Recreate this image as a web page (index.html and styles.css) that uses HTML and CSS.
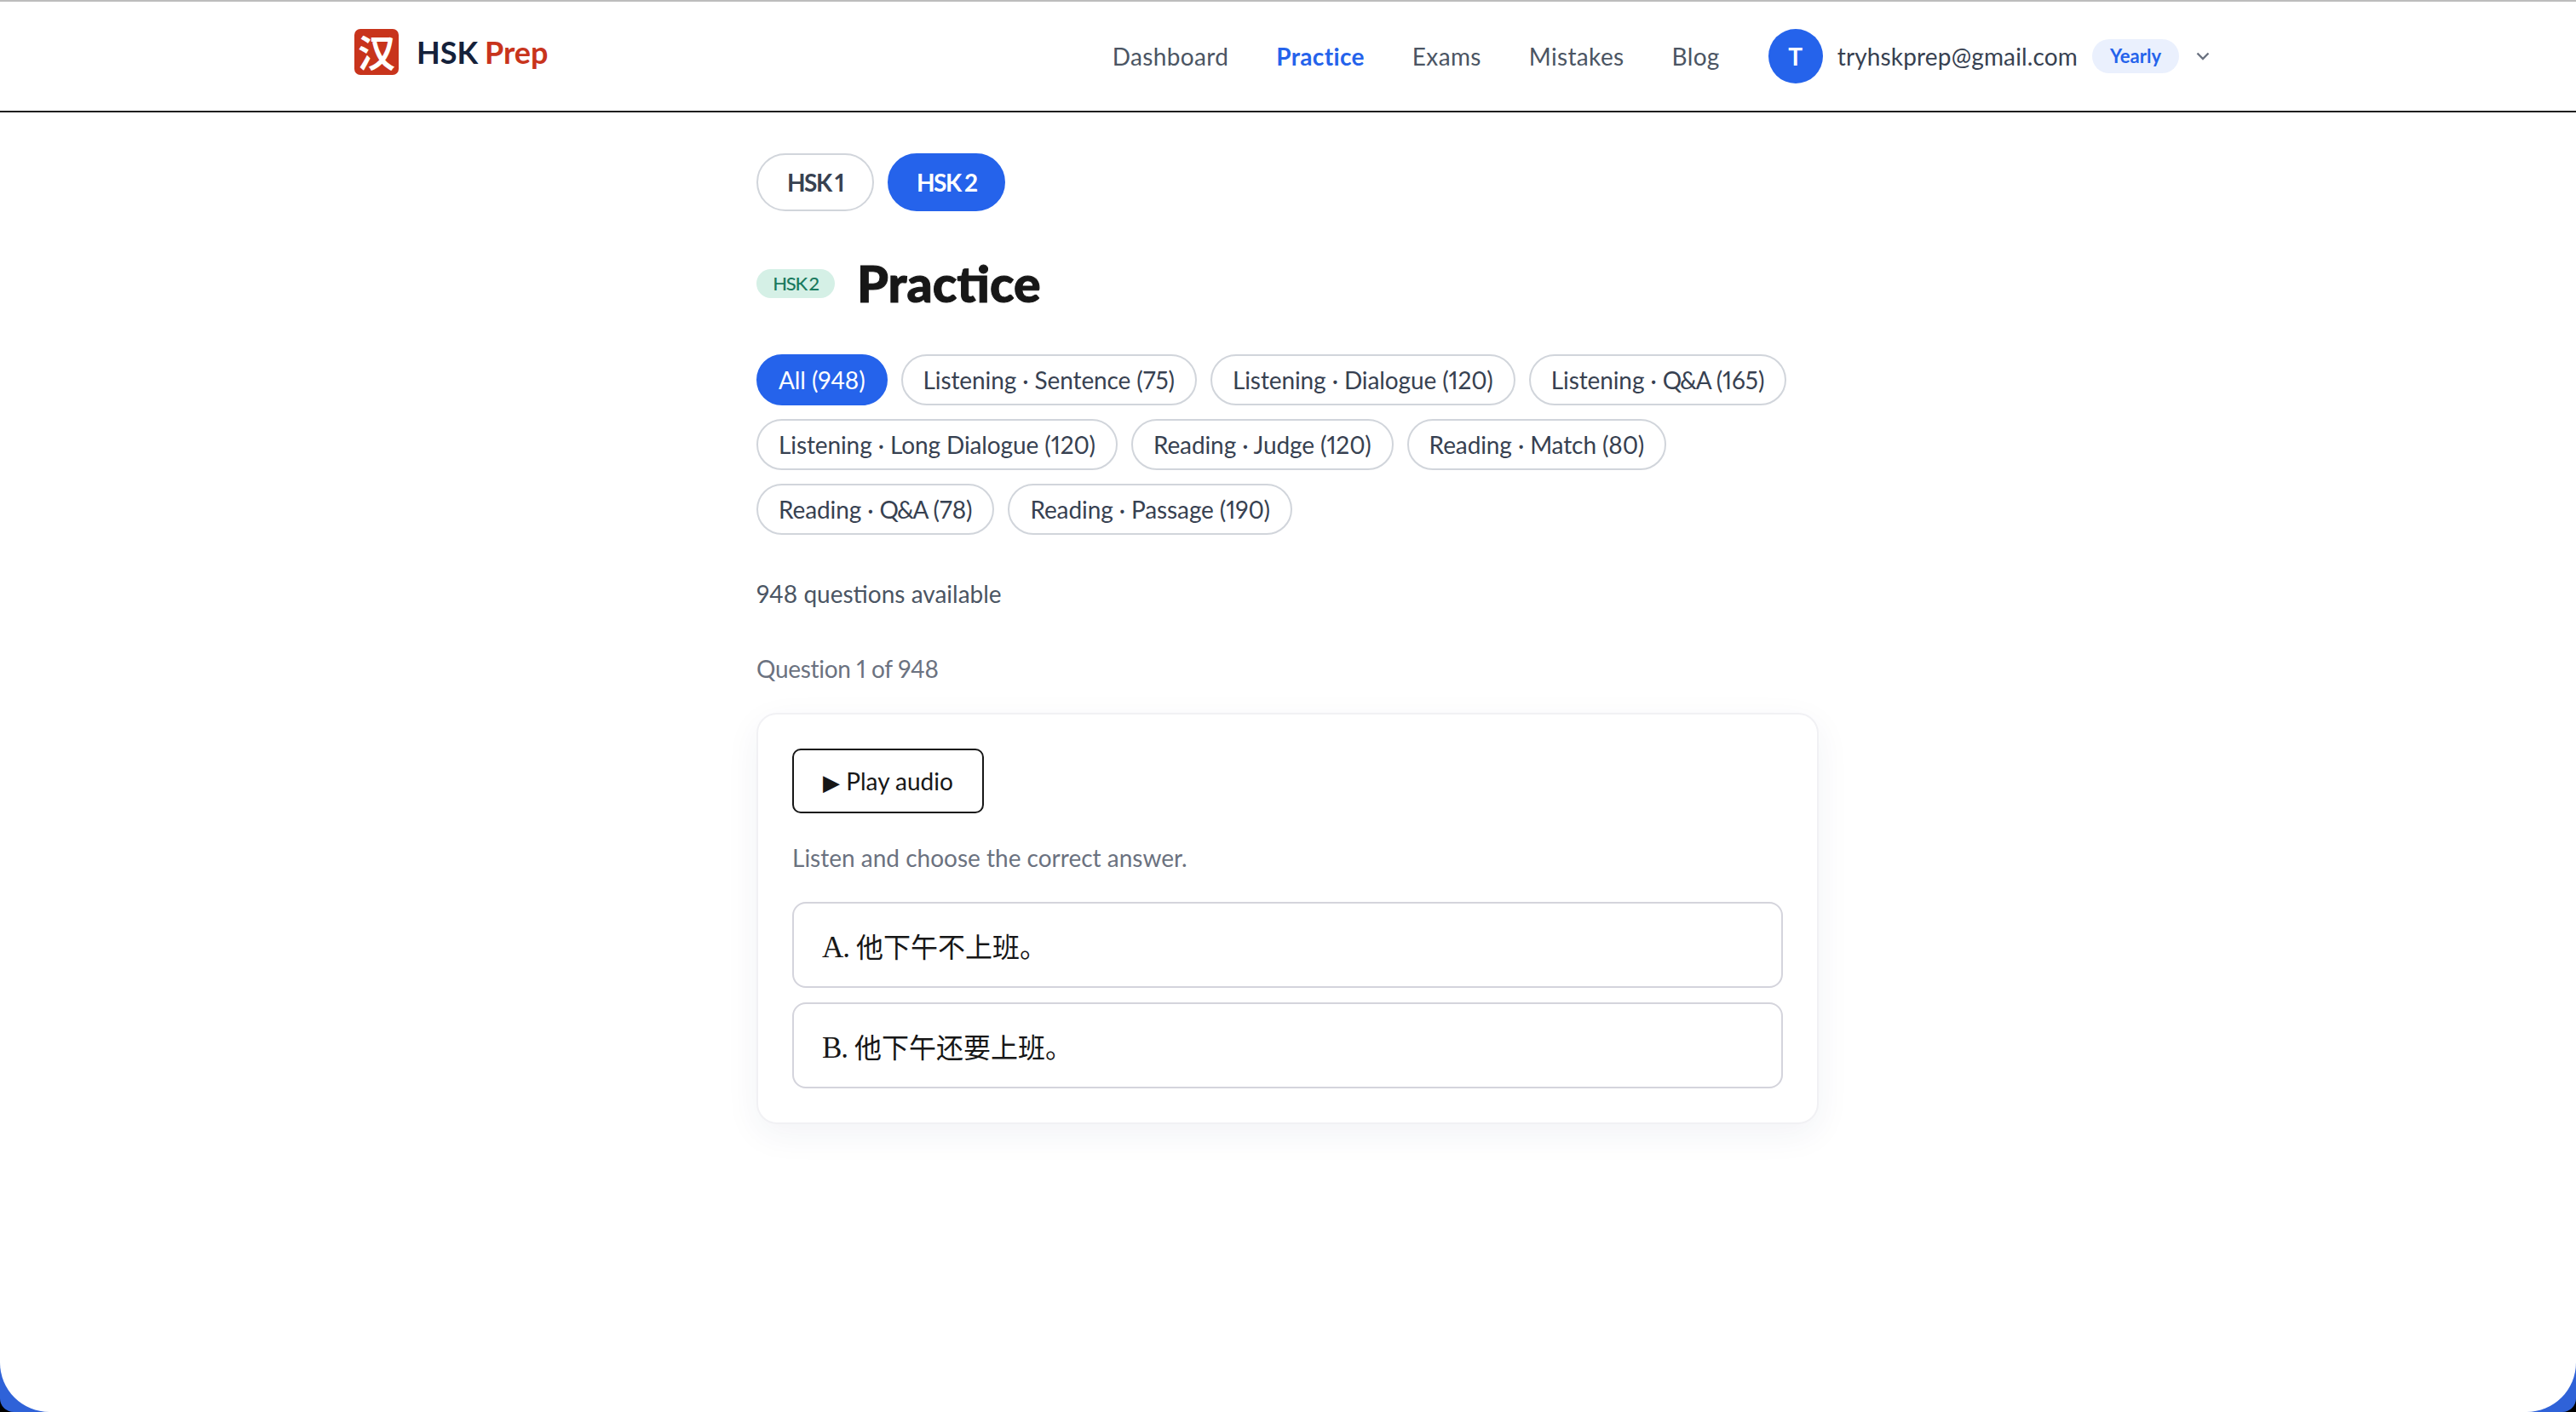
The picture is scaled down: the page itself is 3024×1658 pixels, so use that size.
FILE: index.html
```html
<!DOCTYPE html>
<html lang="en">
<head>
  <meta charset="UTF-8" />
  <meta name="viewport" content="width=device-width, initial-scale=1.0" />
  <title>HSK Prep</title>
  <link rel="stylesheet" href="styles.css">
</head>
<body>
  <div class="frame">
    <div class="page">
      <header class="topbar">
        <a class="brand" href="#">
          <span class="brand-mark">汉</span>
          <span class="brand-name">HSK <span class="brand-accent">Prep</span></span>
        </a>
        <nav class="nav">
          <a href="#">Dashboard</a>
          <a href="#" class="active">Practice</a>
          <a href="#">Exams</a>
          <a href="#">Mistakes</a>
          <a href="#">Blog</a>
        </nav>
        <div class="user">
          <span class="avatar">T</span>
          <span class="email">tryhskprep@gmail.com</span>
          <span class="plan">Yearly</span>
          <svg class="chevron" viewBox="0 0 16 10" aria-hidden="true">
            <path d="M1.5 1.5L8 8l6.5-6.5" fill="none" stroke="#6b7280" stroke-width="2.4"/>
          </svg>
        </div>
      </header>

      <main class="content">
        <div class="levels">
          <button class="level">HSK 1</button>
          <button class="level active">HSK 2</button>
        </div>

        <div class="title-row">
          <span class="badge">HSK 2</span>
          <h1>Practice</h1>
        </div>

        <div class="filters">
          <button class="filter active">All (948)</button>
          <button class="filter">Listening · Sentence (75)</button>
          <button class="filter">Listening · Dialogue (120)</button>
          <button class="filter">Listening · <span class="qa">Q&amp;A</span> (165)</button>
          <button class="filter">Listening · Long Dialogue (120)</button>
          <button class="filter">Reading · Judge (120)</button>
          <button class="filter">Reading · Match (80)</button>
          <button class="filter">Reading · <span class="qa">Q&amp;A</span> (78)</button>
          <button class="filter">Reading · Passage (190)</button>
        </div>

        <p class="available">948 questions available</p>
        <p class="counter">Question 1 of 948</p>

        <section class="card">
          <button class="play"><span class="play-icon">▶</span> Play audio</button>
          <p class="prompt">Listen and choose the correct answer.</p>
          <div class="options">
            <button class="option"><span class="option-key">A.</span> 他下午不上班。</button>
            <button class="option"><span class="option-key">B.</span> 他下午还要上班。</button>
          </div>
        </section>
      </main>
    </div>
  </div>
</body>
</html>
```

FILE: styles.css
```css
* { box-sizing: border-box; }
html, body {
  margin: 0;
  height: 100%;
  background: #000;
  overflow: hidden;
}
body {
  font-family: Lato, "Noto Sans", sans-serif;
  font-variant-numeric: proportional-nums;
  color: #171717;
}
button { font-family: inherit; font-variant-numeric: inherit; cursor: pointer; }

.frame {
  height: 100%;
  background: #2f62d8;
  border-radius: 0 0 16px 16px;
}
.page {
  height: 100%;
  background: #fff;
  border-radius: 0 0 58px 58px;
  border-top: 2px solid #bdbdbd;
}

.topbar {
  display: flex;
  align-items: center;
  height: 130px;
  padding: 0 430px 0 416px;
  border-bottom: 2px solid #1f1f1f;
}
.brand {
  display: flex;
  align-items: center;
  gap: 21px;
  text-decoration: none;
  margin-top: -10px;
}
.brand-mark {
  width: 52px;
  height: 54px;
  line-height: 52px;
  text-align: center;
  border-radius: 7px;
  background: #c8341c;
  color: #fff;
  font-family: "Noto Sans CJK SC", sans-serif;
  font-size: 44px;
  font-weight: 700;
}
.brand-name {
  font-size: 36px;
  font-weight: 700;
  color: #14213a;
  word-spacing: -1px;
}
.brand-accent { color: #c8341c; }

.nav {
  display: flex;
  gap: 56px;
  margin-left: auto;
}
.nav a {
  font-size: 28px;
  letter-spacing: 0.35px;
  color: #4b5563;
  text-decoration: none;
}
.nav a.active {
  color: #2563eb;
  font-weight: 700;
}

.user {
  display: flex;
  align-items: center;
  margin-left: 57px;
}
.avatar {
  display: flex;
  align-items: center;
  justify-content: center;
  width: 64px;
  height: 64px;
  border-radius: 50%;
  background: #2563eb;
  color: #fff;
  font-size: 28px;
  font-weight: 700;
}
.email {
  margin-left: 17px;
  font-size: 28px;
  letter-spacing: 0.15px;
  color: #374151;
}
.plan {
  margin-left: 17px;
  padding: 0 21px;
  height: 40px;
  line-height: 40px;
  border-radius: 20px;
  background: #eaf0fd;
  color: #2563eb;
  font-size: 22px;
  font-weight: 700;
}
.chevron {
  width: 16px;
  height: 10px;
  margin-left: 20px;
}

.content {
  width: 1247px;
  margin-left: 888px;
  padding-top: 48px;
}

.levels {
  display: flex;
  gap: 16px;
}
.level {
  height: 68px;
  padding: 0 34px;
  border: 2px solid #d1d5db;
  border-radius: 34px;
  background: #fff;
  color: #374151;
  font-size: 28px;
  font-weight: 700;
  letter-spacing: -1.5px;
  word-spacing: -1px;
}
.level.active {
  padding: 0 32px;
  border-color: #2563eb;
  background: #2563eb;
  color: #fff;
}

.title-row {
  display: flex;
  align-items: center;
  gap: 26px;
  margin-top: 43px;
}
.badge {
  width: 92px;
  height: 34px;
  line-height: 34px;
  text-align: center;
  border-radius: 17px;
  background: #d5f0e6;
  color: #1a7a5e;
  font-size: 22px;
  font-weight: 500;
  letter-spacing: -1.2px;
  word-spacing: -2px;
}
h1 {
  margin: 0;
  font-size: 59px;
  font-weight: 900;
  line-height: 84px;
  -webkit-text-stroke: 1px #171717;
}

.filters {
  display: flex;
  flex-wrap: wrap;
  gap: 16px;
  margin-top: 41px;
}
.filter {
  height: 60px;
  padding: 0 24px;
  border: 2px solid #d1d5db;
  border-radius: 30px;
  background: #fff;
  color: #374151;
  font-size: 28px;
  letter-spacing: -0.1px;
}
.filter .qa { letter-spacing: -2px; }
.filter.active {
  border-color: #2563eb;
  background: #2563eb;
  color: #fff;
}

.available {
  margin: 49px 0 0;
  font-size: 28px;
  line-height: 40px;
  color: #4b5563;
}
.counter {
  margin: 48px 0 0;
  font-size: 28px;
  line-height: 40px;
  letter-spacing: -0.3px;
  color: #6b7280;
}

.card {
  margin-top: 32px;
  padding: 40px;
  border: 2px solid #f1f1f4;
  border-radius: 24px;
  background: #fff;
  box-shadow: 0 12px 40px rgba(30, 50, 110, 0.06);
}
.play {
  display: block;
  width: 225px;
  height: 76px;
  border: 2px solid #171717;
  border-radius: 10px;
  background: #fff;
  color: #171717;
  font-size: 28px;
}
.play-icon { font-size: 26px; }
.prompt {
  margin: 32px 0 0;
  font-size: 28px;
  line-height: 40px;
  color: #6b7280;
}
.options {
  display: flex;
  flex-direction: column;
  gap: 17px;
  margin-top: 32px;
}
.option {
  height: 101px;
  padding: 0 33px;
  border: 2px solid #d4d4dc;
  border-radius: 16px;
  background: #fff;
  color: #171717;
  font-family: "Liberation Serif", "Noto Sans CJK SC", serif;
  font-size: 32px;
  text-align: left;
}
.option-key {
  font-size: 35px;
  letter-spacing: -1px;
}
```
